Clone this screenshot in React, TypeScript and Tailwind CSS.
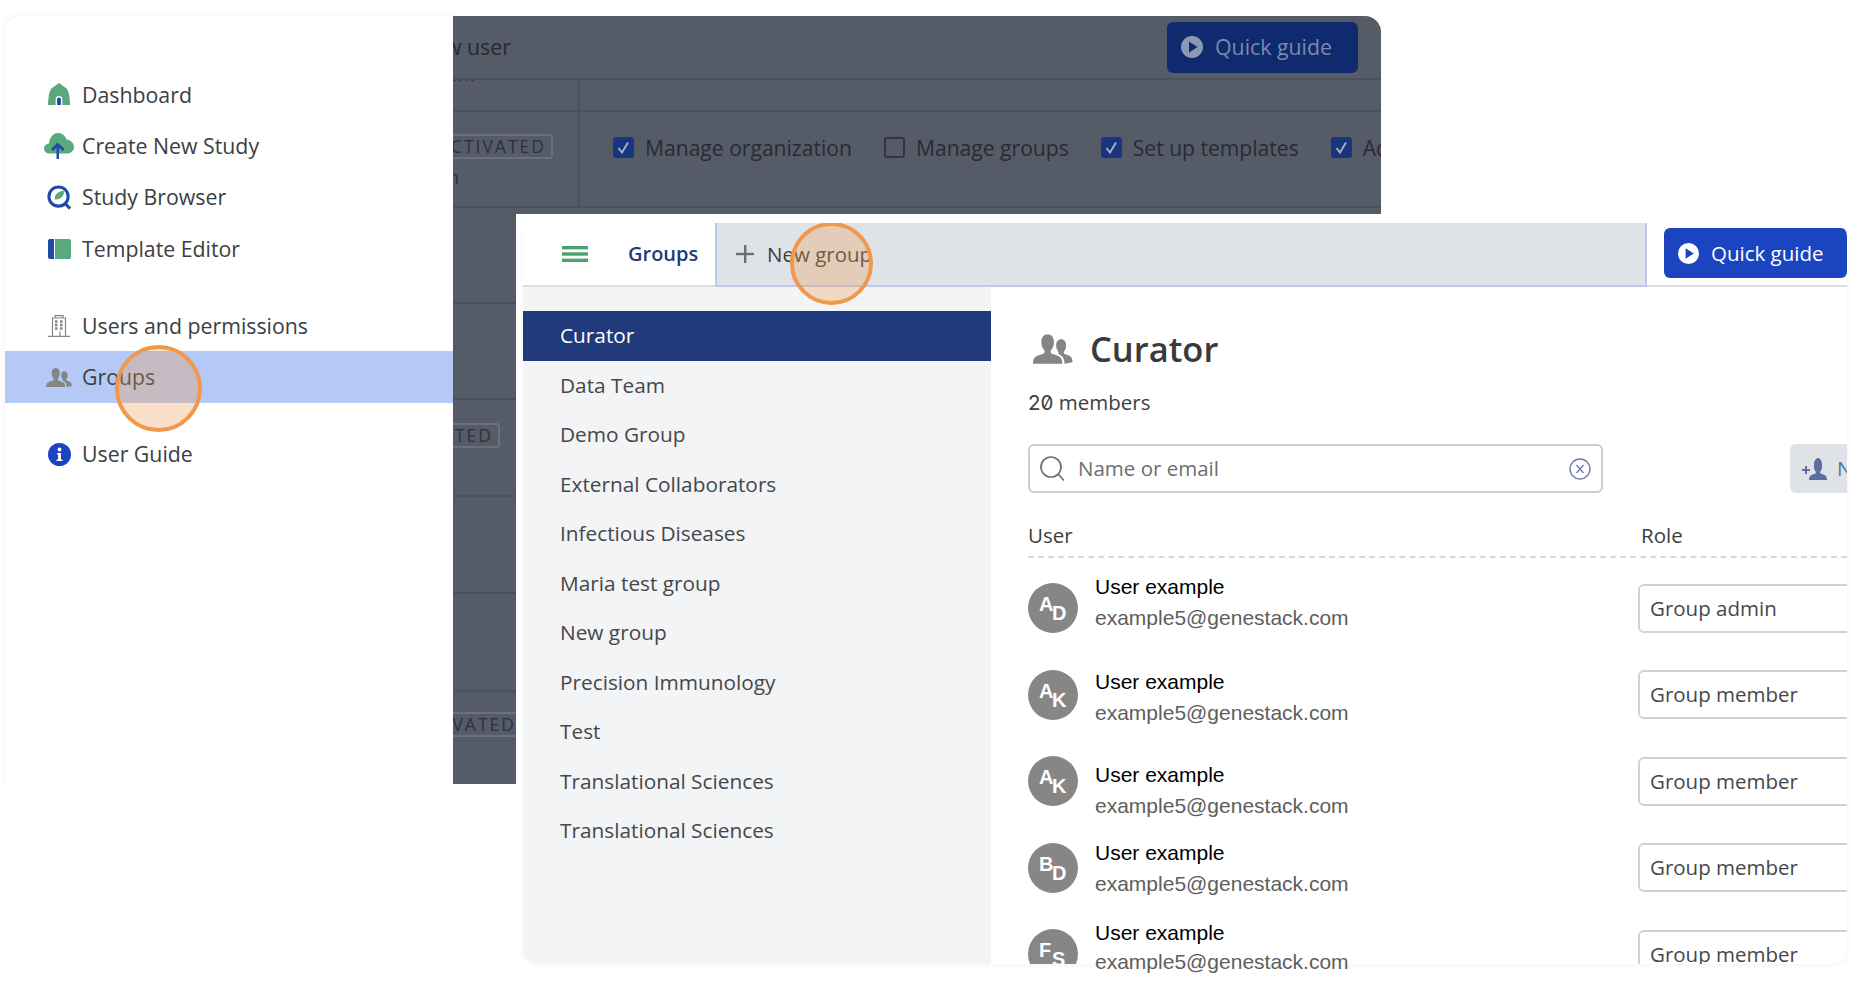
import React from 'react';

const GroupIcon = ({ className }: { className: string }) => (
  <svg viewBox="0 0 28 20" className={className} fill="#858585">
    <path d="M0 20c0-3 1-4.600 3.500-5.500l4-1.500c.6-.8.6-1.500.2-2.200C6.300 9.300 5.700 7.300 5.700 5.200 5.700 2 7.500 0 10 0s4.300 2 4.300 5.200c0 2.100-.6 4.100-2 5.600-.4.700-.4 1.400.2 2.200l4 1.500c2.500.9 3.500 2.500 3.500 5.500z" />
    <path d="M21.500 20c0-2.800-.8-4.500-3-6l-1.300-.8c.3-.5.300-1 0-1.500-1-1.200-1.400-2.700-1.400-4.200 0-2.500 1.400-4.100 3.400-4.100s3.400 1.600 3.400 4.100c0 1.500-.4 3-1.400 4.200-.3.500-.3 1 0 1.500l3 1.100c2 .7 2.800 2.300 2.800 4.700z" />
  </svg>
);

const PlayIcon = ({ fill, inner, className }: { fill: string; inner: string; className: string }) => (
  <svg viewBox="0 0 22 22" className={className}>
    <circle cx="11" cy="11" r="11" fill={fill} />
    <path d="M8 5.500v11l8.500-5.500z" fill={inner} />
  </svg>
);

const icons: Record<string, React.ReactNode> = {
  dashboard: (
    <svg viewBox="0 0 24 24" className="w-[24px] h-[23px]">
      <path d="M12 0l7.500 5.500C22 8 23 12 23.500 23H.500C1 12 2 8 4.500 5.500z" fill="#5aa97c" />
      <path d="M8.500 23v-6a3.500 3.500 0 017 0v6z" fill="#fff" />
      <path d="M10 23v-6a2 2 0 014 0v6z" fill="#1f4aa8" />
    </svg>
  ),
  create: (
    <svg viewBox="0 0 30 26" className="w-[30px] h-[26px]">
      <path d="M6 20.500C2.500 20.500 0 18.500 0 15.500c0-2.800 2-4.500 5-5C5.500 5 9 0 14 0c4.500 0 7.500 3 8.500 6.500 4.500.5 7.500 4 7.500 7.500 0 4-3.500 6.500-7 6.500z" fill="#5aa97c" />
      <path d="M12.500 26V14.500l-3.500 3.500-2-2L13.500 9.500l7 6.500-2 2-3.500-3.500V26z" fill="#1f4aa8" />
    </svg>
  ),
  browser: (
    <svg viewBox="0 0 26 26" className="w-[25px] h-[25px]">
      <path d="M8 14.500C8 9.500 12 6.500 17.500 6c.8 4.500-2.500 9-9 9z" fill="#5aa97c" />
      <circle cx="12" cy="12" r="10" fill="none" stroke="#1f4aa8" strokeWidth="3.200" />
      <path d="M18.500 19l5.500 5.500" stroke="#1f4aa8" strokeWidth="3.200" />
    </svg>
  ),
  template: (
    <svg viewBox="0 0 23 20" className="w-[23px] h-[20px]">
      <path d="M2 0h4v20H2a2 2 0 01-2-2V2a2 2 0 012-2z" fill="#1f4aa8" />
      <path d="M7 0h14a2 2 0 012 2v16a2 2 0 01-2 2H7z" fill="#5aa97c" />
    </svg>
  ),
  building: (
    <svg viewBox="0 0 22 22" className="w-[22px] h-[22px]" fill="none" stroke="#858585" strokeWidth="1.200">
      <path d="M0 21.400h22M4.500 21.400V3h13v18.400M7 3V.6h8V3" />
      <path d="M7 6.500h2.500M12 6.500h2.500M7 10h2.500M12 10h2.500M7 13.500h2.500M12 13.500h2.500" strokeWidth="2.400" />
      <path d="M12 16.500v5" />
    </svg>
  ),
  groups: <GroupIcon className="w-[27px] h-[19px]" />,
  info: (
    <svg viewBox="0 0 23 23" className="w-[23px] h-[23px]">
      <circle cx="11.500" cy="11.500" r="11.500" fill="#1a44c0" />
      <circle cx="11.500" cy="6.500" r="1.900" fill="#fff" />
      <path d="M9 10h4v6.500h1.500V18h-6v-1.500H10V11.500H9z" fill="#fff" />
    </svg>
  ),
};

const NavRow = ({ icon, label, active }: { icon: string; label: string; active?: boolean }) => (
  <div className={`flex h-[51.3px] items-center ${active ? 'bg-[#b5c9f7]' : ''}`}>
    <div className="flex w-[77px] shrink-0 justify-center pl-[31px]">{icons[icon]}</div>
    <span className="text-[21.3px] text-[#3c3e42] whitespace-nowrap">{label}</span>
  </div>
);

const Check = ({ on, label }: { on: boolean; label: string }) => (
  <div className="flex shrink-0 items-center gap-[11px] whitespace-nowrap">
    {on ? (
      <svg viewBox="0 0 21 21" className="w-[21px] h-[21px] shrink-0">
        <rect width="21" height="21" rx="3" fill="#1a3580" />
        <path d="M5.500 11l3.500 4.500 6-10" fill="none" stroke="#a4adc4" strokeWidth="2" />
      </svg>
    ) : (
      <div className="w-[21px] h-[21px] shrink-0 rounded-[3px] border-2 border-[#32373f]" />
    )}
    <span className="text-[21.1px] text-[#272b34]">{label}</span>
  </div>
);

const Badge = ({ className }: { className: string }) => (
  <span className={`whitespace-nowrap rounded-[3px] border-2 border-[#6a707c] px-[5px] text-[17.5px] leading-[21px] tracking-[2px] text-[#2e323b] ${className}`}>
    DEACTIVATED
  </span>
);

const DarkRow = ({ height, children }: { height: string; children?: React.ReactNode }) => (
  <div className={`${height} border-b-2 border-[#4b515d]`}>{children}</div>
);

const groups = [
  'Curator',
  'Data Team',
  'Demo Group',
  'External Collaborators',
  'Infectious Diseases',
  'Maria test group',
  'New group',
  'Precision Immunology',
  'Test',
  'Translational Sciences',
  'Translational Sciences',
];

const members = [
  { a: 'A', b: 'D', role: 'Group admin', shift: 'mb-[12px]' },
  { a: 'A', b: 'K', role: 'Group member', shift: 'mt-[5px]' },
  { a: 'A', b: 'K', role: 'Group member', shift: 'mt-[17px]' },
  { a: 'B', b: 'D', role: 'Group member', shift: 'mt-0' },
  { a: 'F', b: 'S', role: 'Group member', shift: 'mb-[44px]' },
];

const Tap = ({ className }: { className: string }) => (
  <div className={`absolute rounded-full border-[4px] border-[#f0994d] bg-[#f0994d]/30 ${className}`} />
);

export default function App() {
  return (
    <div className="relative h-[982px] w-[1854px] overflow-hidden bg-white font-['Open_Sans',sans-serif]">
      {/* behind: admin page, dimmed */}
      <div className="absolute left-[453px] top-[16px] h-[768px] w-[928px] overflow-hidden rounded-tr-[16px] bg-[#555b67]">
        <div className="flex h-[64px] items-center justify-between border-b-2 border-[#4b515d] pr-[23px]">
          <span className="ml-[-8px] text-[21.3px] text-[#262a33]">w user</span>
          <div className="flex h-[51px] w-[191px] items-center gap-[12px] rounded-[6px] bg-[#0f2a6e] pl-[14px]">
            <PlayIcon fill="#8b97b5" inner="#0f2a6e" className="w-[22px] h-[22px]" />
            <span className="text-[21.3px] text-[#7c89ab]">Quick guide</span>
          </div>
        </div>
        <div className="flex h-[32px] overflow-hidden border-b-2 border-[#4b515d]">
          <div className="w-[127px] shrink-0 border-r-2 border-[#4b515d]">
            <span className="ml-[-191px] mt-[-19px] block whitespace-nowrap text-[18px] text-[#2e323b]">example@genestack.com</span>
          </div>
        </div>
        <div className="flex h-[96px] items-start border-b-2 border-[#4b515d]">
          <div className="flex h-full w-[127px] shrink-0 flex-col items-end overflow-hidden border-r-2 border-[#4b515d] pr-[25px]">
            <Badge className="mt-[22px]" />
            <span className="ml-[-5px] mt-[6px] self-start text-[18px] leading-[24px] text-[#2e323b]">n</span>
          </div>
          <div className="flex items-start gap-[32px] pl-[33px] pt-[20px]">
            <Check on label="Manage organization" />
            <Check on={false} label="Manage groups" />
            <Check on label="Set up templates" />
            <Check on label="Administer" />
          </div>
        </div>
        <DarkRow height="h-[96px]" />
        <DarkRow height="h-[96px]" />
        <DarkRow height="h-[97px]">
          <div className="flex h-full w-[127px] flex-col items-end overflow-hidden pr-[80px]">
            <Badge className="mt-[23px]" />
          </div>
        </DarkRow>
        <DarkRow height="h-[97px]" />
        <DarkRow height="h-[98px]" />
        <div className="flex h-[92px] w-[70px] flex-col items-end overflow-hidden">
          <Badge className="mt-[20px]" />
        </div>
      </div>

      {/* sidebar */}
      <div className="absolute left-[5px] top-[16px] h-[768px] w-[448px] rounded-tl-[16px] bg-white pt-[53px] shadow-[-1px_-2px_5px_rgba(0,0,0,0.04)]">
        <NavRow icon="dashboard" label="Dashboard" />
        <NavRow icon="create" label="Create New Study" />
        <NavRow icon="browser" label="Study Browser" />
        <NavRow icon="template" label="Template Editor" />
        <div className="h-[26px]" />
        <NavRow icon="building" label="Users and permissions" />
        <NavRow icon="groups" label="Groups" active />
        <div className="h-[26px]" />
        <NavRow icon="info" label="User Guide" />
      </div>
      <Tap className="left-[115px] top-[345px] w-[87px] h-[87px]" />

      {/* front: groups page */}
      <div className="absolute bottom-0 left-[516px] right-0 top-[214px] bg-white pb-[18px] pl-[7px] pr-[7px] pt-[9px]">
        <div className="relative flex h-full flex-col overflow-hidden rounded-[14px] shadow-[0_1px_5px_rgba(0,0,0,0.05)]">
          <div className="flex h-[64px] shrink-0 border-b-2 border-[#dcdde0]">
            <div className="flex w-[192px] shrink-0 items-center pl-[39px]">
              <svg viewBox="0 0 26 16" className="w-[26px] h-[16px]" fill="#4fa06f">
                <rect width="26" height="3.400" />
                <rect y="6.300" width="26" height="3.400" />
                <rect y="12.600" width="26" height="3.400" />
              </svg>
              <span className="ml-[40px] text-[20px] font-semibold text-[#213a7c]">Groups</span>
            </div>
            <div className="flex h-[64px] w-[932px] items-center border-x-2 border-b-2 border-[#bcc9ee] bg-[#dfe2e7] pl-[19px]">
              <svg viewBox="0 0 18 18" className="w-[18px] h-[18px]" fill="#6e6e6e">
                <rect x="8" width="2.400" height="18" />
                <rect y="7.800" width="18" height="2.400" />
              </svg>
              <span className="ml-[13px] text-[20.5px] text-[#3c3e42]">New group</span>
            </div>
            <div className="ml-[17px] mt-[5px] flex h-[50px] flex-1 items-center gap-[12px] rounded-[6px] bg-[#1a44c0] pl-[14px]">
              <PlayIcon fill="#fff" inner="#1a44c0" className="w-[21px] h-[21px]" />
              <span className="text-[20.5px] text-white">Quick guide</span>
            </div>
          </div>
          <div className="flex min-h-0 flex-1">
            <div className="w-[468px] shrink-0 bg-[#f3f4f6] pt-[24px]">
              {groups.map((g, i) => (
                <div
                  key={i}
                  className={`flex h-[49.5px] items-center pl-[37px] text-[20.8px] ${i === 0 ? 'bg-[#213a7c] text-white' : 'text-[#45474b]'}`}
                >
                  {g}
                </div>
              ))}
            </div>
            <div className="min-w-0 flex-1 overflow-hidden pl-[37px]">
              <div className="mt-[40px] flex h-[44px] items-center gap-[16px] pl-[5px]">
                <GroupIcon className="w-[41px] h-[30px]" />
                <span className="text-[34.5px] font-semibold text-[#3a3a3a]">Curator</span>
              </div>
              <div className="mt-[16px] h-[30px] text-[20.5px] leading-[30px] text-[#3c3e42]">
                <span className="font-['Inter'] [font-feature-settings:'zero']">20</span> members
              </div>
              <div className="mt-[27px] flex h-[49px]">
                <div className="flex w-[575px] shrink-0 items-center rounded-[6px] border-2 border-[#cbccd0] pl-[10px]">
                  <svg viewBox="0 0 25 25" className="w-[25px] h-[25px] shrink-0" fill="none" stroke="#6f6f6f" strokeWidth="1.700">
                    <circle cx="11" cy="11" r="10" />
                    <path d="M18 18l6 6.500" />
                  </svg>
                  <input placeholder="Name or email" className="ml-[13px] min-w-0 flex-1 bg-transparent text-[20.5px] text-[#6d6e72] outline-none placeholder:text-[#6d6e72]" />
                  <svg viewBox="0 0 22 22" className="mr-[10px] w-[22px] h-[22px] shrink-0" fill="none" stroke="#6f7fb0" strokeWidth="1.400">
                    <circle cx="11" cy="11" r="10" />
                    <path d="M7.500 7l7 8M14.500 7l-7 8" />
                  </svg>
                </div>
                <div className="ml-[187px] flex w-[200px] shrink-0 items-center gap-[10px] rounded-[6px] bg-[#dfe2e7] pl-[12px]">
                  <svg viewBox="0 0 25 22" className="w-[25px] h-[22px] shrink-0" fill="#5a6fa0">
                    <path d="M7 22c0-3 1-4.500 3-5.200l3.500-1.300c.5-.7.5-1.300.2-2-1.300-1.300-1.800-3-1.800-5C11.900 3.500 13.500 0 16 0s4.100 3.500 4.100 8.500c0 2-.5 3.700-1.800 5-.3.700-.3 1.300.2 2l3.500 1.300c2 .7 3 2.200 3 5.200z" />
                    <path d="M0 11h3V8h2v3h3v2H5v3H3v-3H0z" />
                  </svg>
                  <span className="whitespace-nowrap text-[20.5px] text-[#5a6fa0]">New member</span>
                </div>
              </div>
              <div className="mt-[26px] flex h-[39px] items-start border-b-2 border-dashed border-[#d8d8d8] text-[20.5px] leading-[32px] text-[#3c3e42]">
                <span className="w-[613px]">User</span>
                <span>Role</span>
              </div>
              <div className="pt-[7px]">
                {members.map((m, i) => (
                  <div key={i} className="flex h-[86.5px] items-center">
                    <div className="h-[50px] w-[50px] shrink-0 rounded-full bg-[#868686] pl-[11px] pt-[17px] font-['Liberation_Sans'] text-[20px] font-bold leading-[9px] text-white">
                      <div>{m.a}</div>
                      <div className="ml-[13px]">{m.b}</div>
                    </div>
                    <div className={`ml-[17px] w-[543px] shrink-0 font-['Liberation_Sans'] text-[21px] leading-[31px] ${m.shift}`}>
                      <div className="text-black">User example</div>
                      {i < 4 && <div className="text-[#5e5e5e]">example5@genestack.com</div>}
                    </div>
                    <div className="flex h-[49px] w-[260px] shrink-0 items-center rounded-[6px] border-2 border-[#d0d1d5] pl-[10px] text-[20.5px] text-[#45474b]">
                      {m.role}
                    </div>
                  </div>
                ))}
              </div>
            </div>
          </div>
          <Tap className="left-[267px] top-[-1px] w-[83px] h-[83px]" />
        </div>
        {/* last address sticks out past the card's bottom edge */}
        <div className="absolute left-[579px] top-[732px] font-['Liberation_Sans'] text-[21px] leading-[31px] text-[#5e5e5e]">
          example5@genestack.com
        </div>
      </div>
    </div>
  );
}
